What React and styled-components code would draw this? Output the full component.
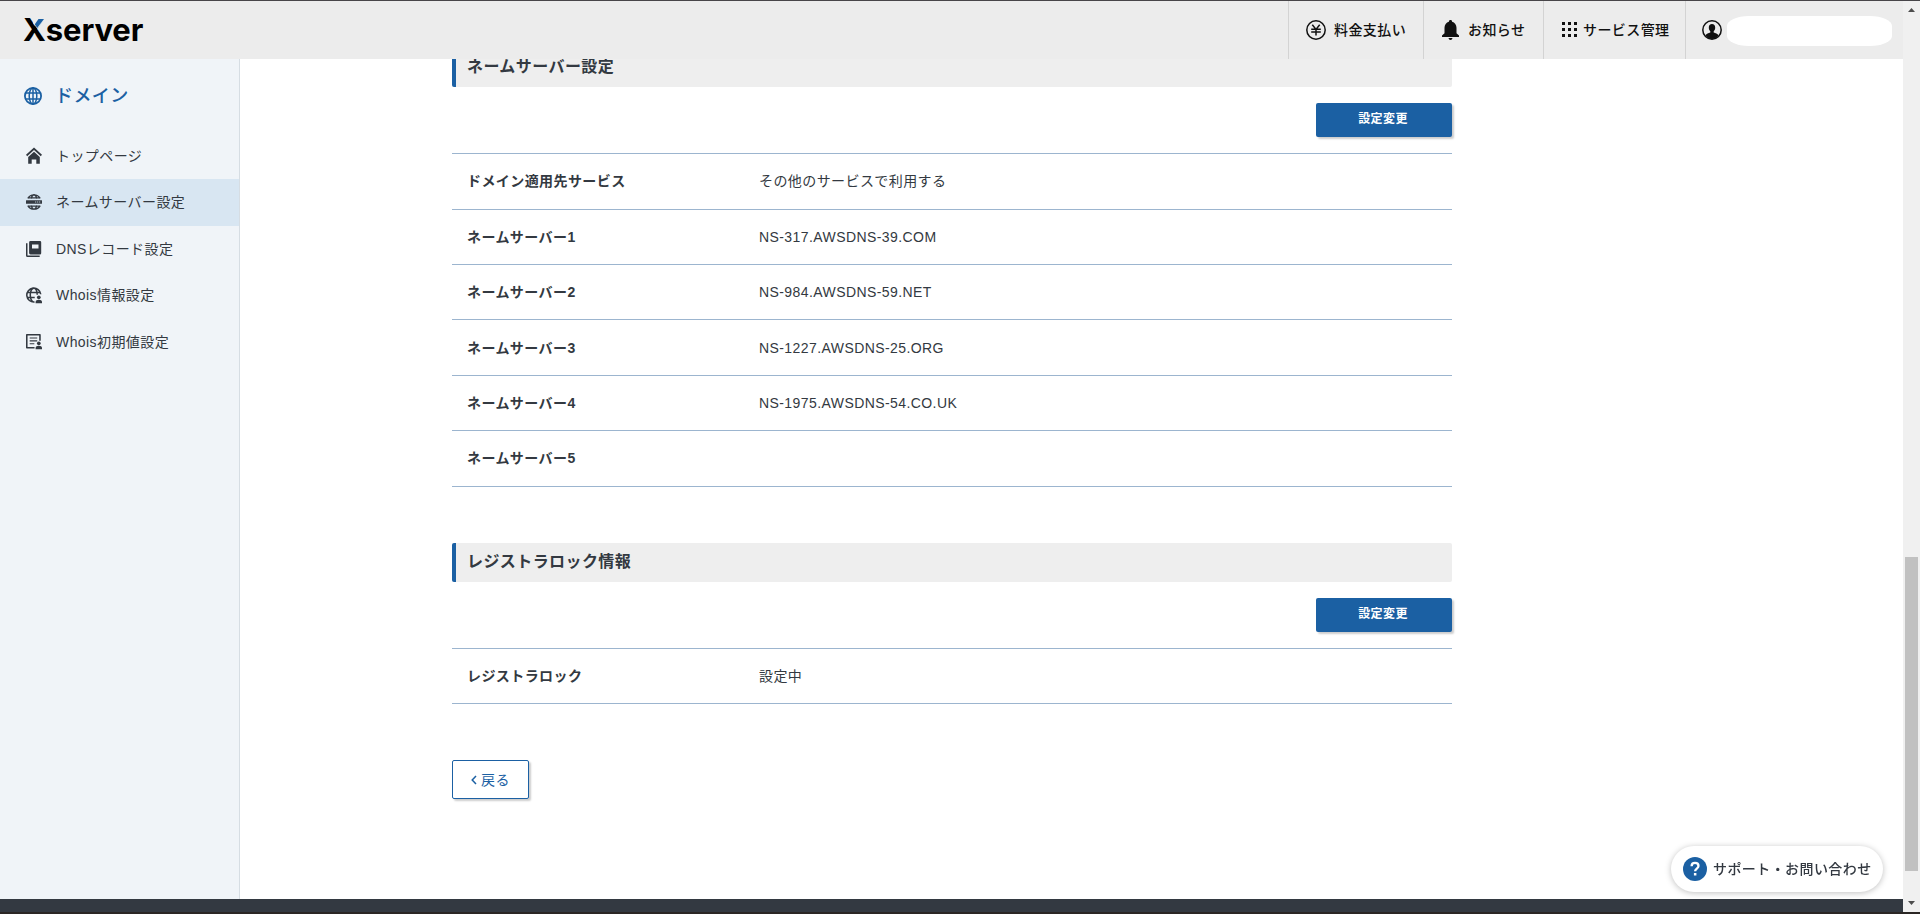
import styled, { createGlobalStyle, css } from "styled-components";

const GlobalStyle = createGlobalStyle`
  * {
    box-sizing: border-box;
  }
  body {
    margin: 0;
    background: #fff;
    color: #333941;
    font-family: "Liberation Sans", "Noto Sans CJK JP", sans-serif;
    font-size: 14px;
    line-height: 20px;
    letter-spacing: 0.03em;
  }
  a {
    color: inherit;
    text-decoration: none;
  }
`;

const Window = styled.div`
  display: flex;
  height: 914px;
  overflow: hidden;
  border-top: 1px solid #474549;
  border-bottom: 2px solid #2b2724;
`;

const Page = styled.div`
  flex: 1;
  min-width: 0;
  display: flex;
  flex-direction: column;
`;

const Header = styled.header`
  display: flex;
  flex: none;
  height: 58px;
  background: #ececec;
  color: #111;
`;

const Logo = styled.a`
  position: relative;
  margin-right: auto;
  padding: 10px 0 0 23px;
  color: #000;
  font: 700 31px/38px Inter, sans-serif;
  letter-spacing: -0.1px;

  svg {
    position: absolute;
    left: 33px;
    top: 17px;
  }
`;

const HeaderItem = styled.a`
  display: flex;
  align-items: center;
  width: ${(props) => props.$width}px;
  padding-left: ${(props) => props.$pad}px;
  gap: ${(props) => props.$gap}px;
  border-left: 1px solid #d3d3d3;
  font-size: 14px;
  font-weight: 500;
  white-space: nowrap;

  svg {
    flex: none;
  }
`;

const UserName = styled.span`
  width: 165px;
  height: 30px;
  margin-top: 2px;
  border-radius: 22px / 10px;
  background: #fff;
`;

const Body = styled.div`
  display: flex;
  flex: 1;
  min-height: 0;
`;

const Sidebar = styled.nav`
  width: 240px;
  flex: none;
  background: #f0f4f8;
  border-right: 1px solid #d6dde3;
`;

const SidebarTitle = styled.h1`
  display: flex;
  align-items: center;
  gap: 13px;
  height: 73.8px;
  margin: 0;
  padding-left: 24px;
  color: #1b60a3;
  font-size: 18px;
  font-weight: 500;
`;

const SidebarItem = styled.a`
  display: flex;
  align-items: center;
  gap: 14px;
  height: 46.4px;
  padding-left: 26px;
  font-size: 14px;
  white-space: nowrap;
  ${(props) =>
    props.$active &&
    css`
      background: #d8e6f2;
    `}
`;

const Main = styled.main`
  flex: 1;
  overflow: hidden;
  padding-left: 212px;
`;

// scrolled down, so the first section title is partly under the header
const Content = styled.div`
  width: 1000px;
  margin-top: -11px;
`;

const Section = styled.section`
  margin-bottom: 56.2px;
`;

const SectionTitle = styled.h2`
  height: 39px;
  margin: 0 0 16px;
  padding-left: 11px;
  border-left: 4px solid #1b60a3;
  border-radius: 2px;
  background: #eee;
  font-size: 16px;
  font-weight: 700;
  line-height: 37px;
`;

const Actions = styled.div`
  display: flex;
  justify-content: flex-end;
  margin-bottom: 16.2px;
`;

const PrimaryButton = styled.button`
  width: 136px;
  height: 34px;
  padding: 0 2px 2px 0;
  border: 0;
  border-radius: 2px;
  background: #1b60a3;
  box-shadow: 2px 2px 2px rgba(0, 0, 0, 0.2);
  color: #fff;
  font: inherit;
  font-size: 12px;
  font-weight: 700;
  letter-spacing: inherit;
`;

const Table = styled.dl`
  margin: 0;
  border-top: 1px solid #9cb5cf;
`;

const Row = styled.div`
  display: grid;
  grid-template-columns: 292px 1fr;
  align-items: center;
  height: 55.4px;
  padding-left: 15px;
  border-bottom: 1px solid #9cb5cf;

  dt {
    font-weight: 700;
  }
  dd {
    margin: 0;
  }
`;

const BackButton = styled.button`
  display: flex;
  align-items: center;
  justify-content: center;
  gap: 4px;
  width: 77px;
  height: 39px;
  padding: 0;
  border: 1px solid #1b60a3;
  border-radius: 2px;
  background: #fff;
  box-shadow: 2px 2px 2px rgba(0, 0, 0, 0.2);
  color: #1b60a3;
  font: inherit;
  letter-spacing: inherit;
`;

const Footer = styled.footer`
  flex: none;
  height: 13px;
  background: #333941;
`;

const Support = styled.a`
  position: fixed;
  right: 37px;
  bottom: 22px;
  display: flex;
  align-items: center;
  gap: 6px;
  width: 212px;
  height: 46px;
  padding: 0 0 1px 12px;
  border-radius: 23px;
  background: #fff;
  box-shadow: 0 1px 6px rgba(0, 0, 0, 0.25);
  font-size: 14px;
  font-weight: 500;
  white-space: nowrap;
`;

const Scrollbar = styled.div`
  display: flex;
  flex-direction: column;
  align-items: center;
  justify-content: space-between;
  width: 17px;
  padding: 7px 0;
  background: #f0f0f0;
`;

const Arrow = styled.i`
  width: 7px;
  height: 4px;
  background: #4d4d4d;
  clip-path: ${(props) =>
    props.$up ? "polygon(0 100%, 50% 0, 100% 100%)" : "polygon(0 0, 100% 0, 50% 100%)"};
`;

const Thumb = styled.div`
  width: 13px;
  height: 314px;
  margin: auto 0 30px;
  background: #c1c1c1;
`;

const Globe = () => (
  <svg width="18" height="18" viewBox="0 0 18 18" fill="none" stroke="currentColor" strokeWidth="1.8">
    <circle cx="9" cy="9" r="8.1" />
    <ellipse cx="9" cy="9" rx="3.8" ry="8.1" strokeWidth="1.5" />
    <path d="M9 1v16M1.8 6h14.4M1.8 12h14.4" strokeWidth="1.5" />
  </svg>
);

const Home = () => (
  <svg width="16" height="17" viewBox="0 0 16 17" fill="currentColor">
    <path d="M0 7.8 8 .5l8 7.3-1.2 1.5L8 3.1 1.2 9.3z" />
    <path d="M2.2 10 8 4.8l5.8 5.2v6.8h-3.5v-4.4H5.7v4.4H2.2z" />
  </svg>
);

const NameServer = () => (
  <svg width="16" height="16" viewBox="0 0 16 16">
    <g fill="none" stroke="currentColor" strokeWidth="1.4">
      <path d="M1.8 4.400a7.200 7.200 0 0 1 12.400 0M5.200 4.600C5.800 2.400 6.800.8 8 .8s2.200 1.600 2.800 3.800M1.800 3.900h12.400" />
      <path d="M1.800 11.600a7.200 7.200 0 0 0 12.400 0M5.200 11.400c.6 2.200 1.600 3.800 2.800 3.800s2.200-1.600 2.800-3.800M1.800 12.100h12.400" />
    </g>
    <rect y="6.200" width="16" height="3.600" rx=".4" fill="currentColor" />
    <path d="M9.200 7.500h1v1h-1zM11.200 7.500h1v1h-1zM13.200 7.500h1v1h-1z" fill="#d8e6f2" />
  </svg>
);

const Records = () => (
  <svg width="16" height="16" viewBox="0 0 16 16" fill="currentColor">
    <path
      fillRule="evenodd"
      d="M4.500 0H14a1.200 1.200 0 0 1 1.200 1.200v11.100a1.200 1.200 0 0 1-1.200 1.200H4.500a1.400 1.400 0 0 1-1.400-1.400V1.400A1.400 1.400 0 0 1 4.500 0zM6 3.400v4.200h6.500V3.400z"
    />
    <path d="M0 2.300h1.500v12.200h12.200V16H1.500A1.500 1.500 0 0 1 0 14.500z" />
  </svg>
);

const Person = () => (
  <g>
    <circle cx="13.200" cy="10.400" r="1.900" />
    <path d="M9.900 16.500v-1.400c0-1.300 1.500-2.100 3.300-2.100s3.300.8 3.300 2.100v1.400z" />
  </g>
);

const WhoisInfo = () => (
  <svg width="16" height="17" viewBox="0 0 16.500 17" fill="currentColor">
    <g fill="none" stroke="currentColor" strokeWidth="1.600">
      <path d="M15.200 7.200A7.200 7.200 0 1 0 8.800 15.200M11.600 7.800C11.400 3.800 10 .9 8 .9S4.400 4 4.400 8 6 15.200 8 15.200M1.200 5.400h13.400M1.200 10.600H9" />
    </g>
    <Person />
  </svg>
);

const WhoisDefault = () => (
  <svg width="16" height="17" viewBox="0 0 16.500 17" fill="currentColor">
    <path
      d="M14.400 7.600V1.500H.8v13.400h8"
      fill="none"
      stroke="currentColor"
      strokeWidth="1.600"
      strokeLinejoin="round"
    />
    <path d="M3.800 4.300h7.800v1.200H3.800zM3.800 7.200h7.800v1.200H3.800zM3.800 10.200h4.800v1.200H3.800z" />
    <Person />
  </svg>
);

const Yen = () => (
  <svg width="20" height="20" viewBox="0 0 20 20" fill="none" stroke="currentColor">
    <circle cx="10" cy="10" r="9.200" strokeWidth="1.500" />
    <path d="M6.300 4.700 10 9.400l3.700-4.700M10 9.400v6.200M5.200 9.300h9.600M5.200 12.100h9.600" strokeWidth="1.500" />
  </svg>
);

const Bell = () => (
  <svg width="17" height="20" viewBox="0 0 17 20" fill="currentColor">
    <path d="M8.500 0c1 0 1.600.7 1.600 1.700 2.700.8 4.400 3 4.400 6v5.500L17 15.600V17H0v-1.400l2.500-2.400V7.700c0-3 1.700-5.200 4.400-6C6.900.7 7.500 0 8.500 0zM6.500 18h4c-.2 1.200-1 1.900-2 1.900s-1.800-.7-2-1.900z" />
  </svg>
);

const Grid = () => (
  <svg width="16" height="16" viewBox="0 0 16 16" fill="currentColor">
    <path d="M0 0h3v3H0zM6 0h3v3H6zM12 0h3v3h-3zM0 6h3v3H0zM6 6h3v3H6zM12 6h3v3h-3zM0 12h3v3H0zM6 12h3v3H6zM12 12h3v3h-3z" />
  </svg>
);

const User = () => (
  <svg width="20" height="20" viewBox="0 0 20 20">
    <circle cx="10" cy="10" r="9.200" fill="none" stroke="currentColor" strokeWidth="1.500" />
    <path
      d="M10 4c2 0 3.200 1.400 3.200 3.400 0 1.700-.6 3-1.500 3.800v1.400c1.800.8 3.800 1.300 4.800 2.600C15 17.800 12.600 19 10 19s-5-1.200-6.500-3.800c1-1.300 3-1.800 4.800-2.600v-1.400c-.9-.8-1.500-2.100-1.500-3.800C6.800 5.400 8 4 10 4z"
      fill="currentColor"
    />
  </svg>
);

const Question = () => (
  <svg width="24" height="24" viewBox="0 0 24 24" fill="none">
    <circle cx="12" cy="12" r="12" fill="#1b60a3" />
    <path d="M8.600 9.200C8.600 7 10 5.900 12 5.900s3.500 1.200 3.500 3c0 2.700-3.400 2.700-3.400 5.400" stroke="#fff" strokeWidth="2.300" />
    <path d="M10.900 16h2.500v2.500h-2.500z" fill="#fff" />
  </svg>
);

const menu = [
  { label: "トップページ", icon: Home },
  { label: "ネームサーバー設定", icon: NameServer, active: true },
  { label: "DNSレコード設定", icon: Records },
  { label: "Whois情報設定", icon: WhoisInfo },
  { label: "Whois初期値設定", icon: WhoisDefault },
];

const nameServers = [
  ["ドメイン適用先サービス", "その他のサービスで利用する"],
  ["ネームサーバー1", "NS-317.AWSDNS-39.COM"],
  ["ネームサーバー2", "NS-984.AWSDNS-59.NET"],
  ["ネームサーバー3", "NS-1227.AWSDNS-25.ORG"],
  ["ネームサーバー4", "NS-1975.AWSDNS-54.CO.UK"],
  ["ネームサーバー5", ""],
];

const registrarLock = [["レジストラロック", "設定中"]];

const SettingSection = ({ title, rows }) => (
  <Section>
    <SectionTitle>{title}</SectionTitle>
    <Actions>
      <PrimaryButton type="button">設定変更</PrimaryButton>
    </Actions>
    <Table>
      {rows.map(([name, value]) => (
        <Row key={name}>
          <dt>{name}</dt>
          <dd>{value}</dd>
        </Row>
      ))}
    </Table>
  </Section>
);

const App = () => {
  return (
    <>
      <GlobalStyle />
      <Window>
        <Page>
          <Header>
            <Logo href="#">
              Xserver
              <svg width="12" height="11" viewBox="0 0 12 11">
                <path d="M0 0h12v1L4.500 11 0 5z" fill="#ececec" />
                <path d="M5.500 1H11L4.200 10 1.800 6.200z" fill="#1b60a3" />
              </svg>
            </Logo>
            <HeaderItem href="#" $width={135} $pad={17} $gap={8}>
              <Yen />
              料金支払い
            </HeaderItem>
            <HeaderItem href="#" $width={120} $pad={18} $gap={9}>
              <Bell />
              お知らせ
            </HeaderItem>
            <HeaderItem href="#" $width={142} $pad={18} $gap={5}>
              <Grid />
              サービス管理
            </HeaderItem>
            <HeaderItem href="#" $width={218} $pad={16} $gap={5}>
              <User />
              <UserName />
            </HeaderItem>
          </Header>
          <Body>
            <Sidebar>
              <SidebarTitle>
                <Globe />
                ドメイン
              </SidebarTitle>
              {menu.map(({ label, icon: Icon, active }) => (
                <SidebarItem key={label} href="#" $active={active}>
                  <Icon />
                  {label}
                </SidebarItem>
              ))}
            </Sidebar>
            <Main>
              <Content>
                <SettingSection title="ネームサーバー設定" rows={nameServers} />
                <SettingSection title="レジストラロック情報" rows={registrarLock} />
                <BackButton type="button">
                  <svg width="6" height="10" viewBox="0 0 6 10" fill="none" stroke="currentColor" strokeWidth="1.500">
                    <path d="M5 1 1.200 5 5 9" />
                  </svg>
                  戻る
                </BackButton>
              </Content>
            </Main>
          </Body>
          <Footer />
        </Page>
        <Scrollbar>
          <Arrow $up />
          <Thumb />
          <Arrow />
        </Scrollbar>
      </Window>
      <Support href="#">
        <Question />
        サポート・お問い合わせ
      </Support>
    </>
  );
};

export default App;
